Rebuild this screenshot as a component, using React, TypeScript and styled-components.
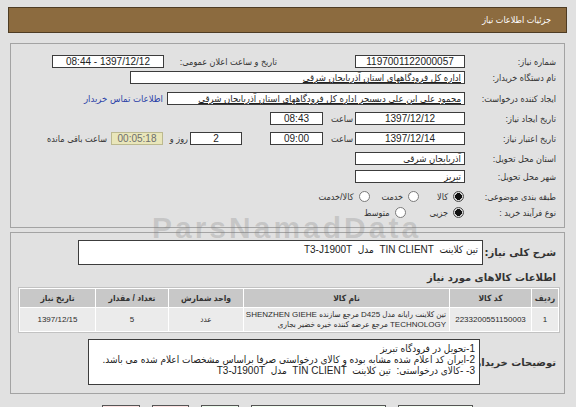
import React from 'react';
import styled, { createGlobalStyle } from 'styled-components';

const GlobalStyle = createGlobalStyle`
    html, body {
        margin: 0;
        padding: 0;
        background: #e1e1e1;
    }
    body {
        font-family: "Liberation Sans", "DejaVu Sans Condensed", "DejaVu Sans", sans-serif;
        font-size: 9px;
        color: #2b2b2b;
    }
`;

const Page = styled.div`
    position: relative;
    width: 576px;
    height: 407px;
    overflow: hidden;
    direction: rtl;
    padding: 7px 9px 0 8px;
    box-sizing: border-box;
`;

const TitleBar = styled.div`
    height: 26px;
    box-sizing: border-box;
    background: #8c6b3f;
    border: 1px solid #4e3c24;
    display: flex;
    align-items: center;
    padding-right: 15px;
    color: #fff;
    font-size: 9px;
`;

const Panel = styled.div<{ $mt: number; $h: number; $pt: number }>`
    margin: ${(p) => p.$mt}px 2px 0 2px;
    height: ${(p) => p.$h}px;
    box-sizing: border-box;
    border: 1px solid #a3a3a3;
    padding: ${(p) => p.$pt}px 4px 0 4px;
    display: flex;
    flex-direction: column;
`;

const Row = styled.div<{ $mt?: number; $h?: number }>`
    display: flex;
    align-items: center;
    margin-top: ${(p) => p.$mt ?? 0}px;
    height: ${(p) => p.$h ?? 13}px;
`;

const Label = styled.div<{ $w?: number; $bold?: boolean }>`
    flex: none;
    box-sizing: border-box;
    width: ${(p) => p.$w ?? 95}px;
    padding-right: 4px;
    white-space: nowrap;
    color: #333;
    font-weight: ${(p) => (p.$bold ? 'bold' : 'normal')};
    font-family: ${(p) => (p.$bold ? '"DejaVu Sans", sans-serif' : 'inherit')};
    font-size: ${(p) => (p.$bold ? 10 : 9)}px;
`;

const InlineLabel = styled.div<{ $w: number; $mr: number }>`
    flex: none;
    width: ${(p) => p.$w}px;
    margin-right: ${(p) => p.$mr}px;
    white-space: nowrap;
    color: #333;
`;

const Field = styled.div<{ $w: number; $mr?: number; $align?: string; $under?: boolean; $num?: boolean }>`
    flex: none;
    width: ${(p) => p.$w}px;
    height: 13px;
    margin-right: ${(p) => p.$mr ?? 0}px;
    box-sizing: border-box;
    border: 1px solid #3c3c3c;
    background: #fff;
    padding: 0 3px;
    text-align: ${(p) => p.$align ?? 'center'};
    font-size: ${(p) => (p.$num ? 10 : 9.5)}px;
    line-height: 11px;
    white-space: nowrap;
    overflow: hidden;
    color: #222;
    text-decoration: ${(p) => (p.$under ? 'underline' : 'none')};
`;

const TimerBox = styled.div`
    flex: none;
    width: 52px;
    height: 13px;
    margin-right: 3px;
    box-sizing: border-box;
    border: 1px solid #bcb98f;
    background: #e9e6ba;
    color: #6e6e6e;
    font-size: 10px;
    text-align: center;
    line-height: 11px;
`;

const ContactLink = styled.a`
    margin-right: 4px;
    color: #2d43a8;
    font-size: 9.5px;
    text-decoration: none;
    white-space: nowrap;
`;

const RadioOption = styled.div<{ $mr: number }>`
    display: flex;
    align-items: center;
    gap: 5px;
    margin-right: ${(p) => p.$mr}px;
    white-space: nowrap;
    color: #333;
`;

const RadioDot = styled.span<{ $on?: boolean }>`
    width: 11px;
    height: 11px;
    box-sizing: border-box;
    border-radius: 50%;
    border: 1px solid ${(p) => (p.$on ? '#4a4a4a' : '#7a7a7a')};
    background: ${(p) =>
        p.$on ? 'radial-gradient(circle, #111 0 3.2px, #d9d9d9 3.6px)' : '#fff'};
`;

const BigBox = styled.div<{ $w: number; $h: number }>`
    flex: none;
    width: ${(p) => p.$w}px;
    height: ${(p) => p.$h}px;
    box-sizing: border-box;
    border: 1px solid #3c3c3c;
    background: #fff;
    padding: 3px 4px;
    font-size: 10px;
    line-height: 11px;
    white-space: pre;
    overflow: hidden;
    color: #222;
`;

const Heading = styled.div`
    margin-top: 6px;
    padding-right: 4px;
    height: 14px;
    line-height: 14px;
    font-family: "DejaVu Sans", sans-serif;
    font-weight: bold;
    font-size: 10px;
    color: #333;
`;

const Table = styled.table`
    margin-top: 2px;
    width: 539px;
    border-collapse: separate;
    border-spacing: 1px;
    background: #fff;
    border: 1px solid #c2c2c2;
    table-layout: fixed;
    box-sizing: border-box;
`;

const Th = styled.th<{ $w: number }>`
    width: ${(p) => p.$w}px;
    height: 18px;
    padding: 0;
    background: #c8c8c8;
    color: #333;
    font-weight: bold;
    font-size: 8.5px;
`;

const Td = styled.td<{ $align?: string }>`
    height: 23px;
    padding: 0 3px;
    background: #ebebeb;
    text-align: ${(p) => p.$align ?? 'center'};
    font-size: 8px;
    line-height: 10px;
    color: #2b2b2b;
    white-space: nowrap;
    overflow: hidden;
`;

const Watermark = styled.div`
    position: absolute;
    left: 152px;
    top: 211px;
    font-family: "Liberation Sans", sans-serif;
    font-weight: bold;
    font-size: 30px;
    letter-spacing: 3px;
    color: rgba(120, 120, 120, 0.26);
    direction: ltr;
    pointer-events: none;
`;

const ButtonBar = styled.div`
    display: flex;
    gap: 12px;
    margin-top: 11px;
    padding-right: 94px;
`;

const Button = styled.div<{ $w: number; $bg: string }>`
    width: ${(p) => p.$w}px;
    height: 20px;
    box-sizing: border-box;
    border: 1px solid #555;
    background: ${(p) => p.$bg};
`;

export default function App() {
    return (
        <Page>
            <GlobalStyle />
            <TitleBar>جزئیات اطلاعات نیاز</TitleBar>

            <Panel $mt={10} $h={185} $pt={11}>
                <Row>
                    <Label>شماره نیاز:</Label>
                    <Field $w={110} $num>1197001122000057</Field>
                    <InlineLabel $w={110} $mr={78}>تاریخ و ساعت اعلان عمومی:</InlineLabel>
                    <Field $w={112} $mr={3} $num>1397/12/12 - 08:44</Field>
                </Row>
                <Row $mt={3}>
                    <Label>نام دستگاه خریدار:</Label>
                    <Field $w={335} $align="right" $under>اداره کل فرودگاههای استان آذربایجان شرقی</Field>
                </Row>
                <Row $mt={8}>
                    <Label>ایجاد کننده درخواست:</Label>
                    <Field $w={298} $align="right" $under>
                        محمود علی ابن علی دبسیجر اداره کل فرودگاههای استان آذربایجان شرقی
                    </Field>
                    <ContactLink href="#">اطلاعات تماس خریدار</ContactLink>
                </Row>
                <Row $mt={7}>
                    <Label>تاریخ ایجاد نیاز:</Label>
                    <Field $w={110} $num>1397/12/12</Field>
                    <InlineLabel $w={27} $mr={2}>ساعت</InlineLabel>
                    <Field $w={53} $mr={3} $num>08:43</Field>
                </Row>
                <Row $mt={7}>
                    <Label>تاریخ اعتبار نیاز:</Label>
                    <Field $w={110} $num>1397/12/14</Field>
                    <InlineLabel $w={27} $mr={2}>ساعت</InlineLabel>
                    <Field $w={53} $mr={3} $num>09:00</Field>
                    <Field $w={52} $mr={28} $num>2</Field>
                    <InlineLabel $w={22} $mr={2}>روز و</InlineLabel>
                    <TimerBox>00:05:18</TimerBox>
                    <InlineLabel $w={70} $mr={4}>ساعت باقی مانده</InlineLabel>
                </Row>
                <Row $mt={7}>
                    <Label>استان محل تحویل:</Label>
                    <Field $w={110} $align="right">آذربایجان شرقی</Field>
                </Row>
                <Row $mt={5}>
                    <Label>شهر محل تحویل:</Label>
                    <Field $w={110} $align="right">تبریز</Field>
                </Row>
                <Row $mt={7}>
                    <Label>طبقه بندی موضوعی:</Label>
                    <RadioOption $mr={1}>
                        <RadioDot $on />
                        کالا
                    </RadioOption>
                    <RadioOption $mr={18}>
                        <RadioDot />
                        خدمت
                    </RadioOption>
                    <RadioOption $mr={12}>
                        <RadioDot />
                        کالا/خدمت
                    </RadioOption>
                </Row>
                <Row $mt={3}>
                    <Label>نوع فرآیند خرید :</Label>
                    <RadioOption $mr={1}>
                        <RadioDot $on />
                        جزیی
                    </RadioOption>
                    <RadioOption $mr={24}>
                        <RadioDot />
                        متوسط
                    </RadioOption>
                </Row>
            </Panel>

            <Panel $mt={4} $h={162} $pt={7}>
                <Row $h={25}>
                    <Label $w={77} $bold>شرح کلی نیاز:</Label>
                    <BigBox $w={405} $h={25}>{'تین کلاینت  TIN CLIENT  مدل  T3-J1900T'}</BigBox>
                </Row>
                <Heading>اطلاعات کالاهای مورد نیاز</Heading>
                <Table>
                    <thead>
                        <tr>
                            <Th $w={26}>ردیف</Th>
                            <Th $w={81}>کد کالا</Th>
                            <Th $w={205}>نام کالا</Th>
                            <Th $w={74}>واحد شمارش</Th>
                            <Th $w={72}>تعداد / مقدار</Th>
                            <Th $w={75}>تاریخ نیاز</Th>
                        </tr>
                    </thead>
                    <tbody>
                        <tr>
                            <Td>1</Td>
                            <Td>2233200551150003</Td>
                            <Td $align="right">
                                تین کلاینت رایانه مدل D425 مرجع سازنده SHENZHEN GIEHE
                                <br />
                                TECHNOLOGY مرجع عرضه کننده خیره خضیر بجاری
                            </Td>
                            <Td>عدد</Td>
                            <Td>5</Td>
                            <Td>1397/12/15</Td>
                        </tr>
                    </tbody>
                </Table>
                <Row $mt={6} $h={46}>
                    <Label $w={80} $bold>توضیحات خریدار:</Label>
                    <BigBox $w={392} $h={46}>
                        {'1-تحویل در فرودگاه تبریز\n'}
                        {'2-ایران کد اعلام شده مشابه بوده و کالای درخواستی صرفا براساس مشخصات اعلام شده می باشد.\n'}
                        {'3- -کالای درخواستی:  تین کلاینت  TIN CLIENT  مدل  T3-J1900T'}
                    </BigBox>
                </Row>
            </Panel>

            <ButtonBar>
                <Button $w={75} $bg="#f6fff4" />
                <Button $w={135} $bg="#f4fff2" />
                <Button $w={38} $bg="#ecfbec" />
                <Button $w={37} $bg="#fde2e2" />
                <Button $w={38} $bg="#fde2e2" />
            </ButtonBar>

            <Watermark>ParsNamadData</Watermark>
        </Page>
    );
}
